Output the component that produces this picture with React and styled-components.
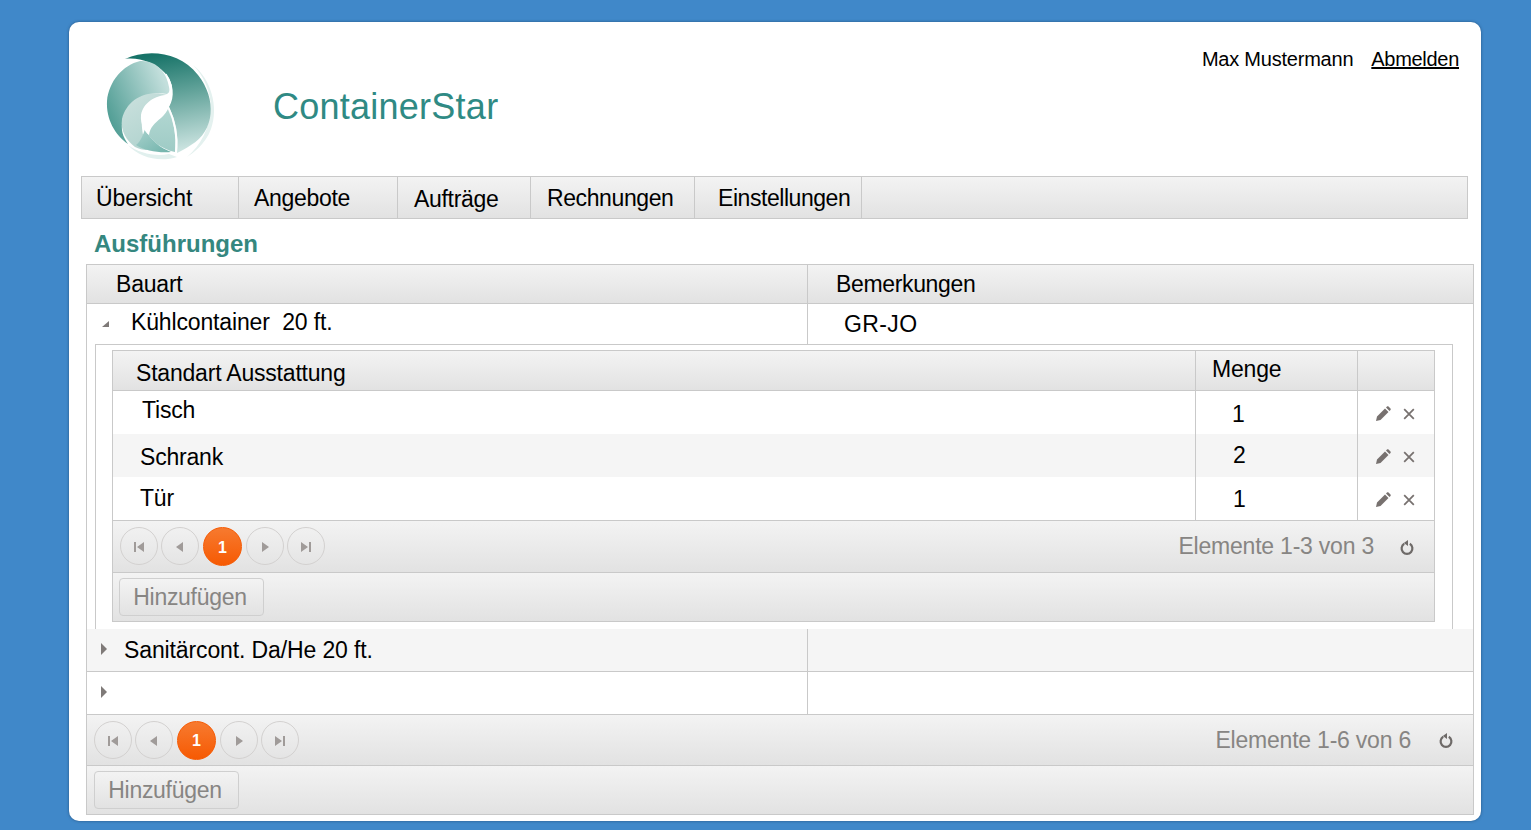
import React from 'react';
import styled, { createGlobalStyle } from 'styled-components';

const Global = createGlobalStyle`
  html, body { margin: 0; padding: 0; background: #4088c9; }
  body { font-family: "Liberation Sans", Arial, sans-serif; color: #000; }
`;

const bar = 'linear-gradient(#f3f3f3, #e2e2e2)';
const line = '#c9c9c9';

const Card = styled.div`
  box-sizing: border-box;
  width: 1412px;
  height: 799px;
  margin: 22px 0 9px 69px;
  background: #fff;
  border-radius: 10px;
  box-shadow: 0 0 3px rgba(20, 50, 80, 0.6);
  overflow: hidden;
  position: relative;
`;

const Header = styled.header`
  height: 154px;
  display: flex;
  align-items: flex-start;
  padding: 0 22px 0 26px;
`;

const Logo = styled.svg`
  width: 130px;
  height: 120px;
  margin-top: 23px;
  flex: none;
`;

const Title = styled.h1`
  margin: 62px 0 0 48px;
  font-size: 36px;
  line-height: 46px;
  font-weight: 400;
  letter-spacing: 0.25px;
  color: #2f8a84;
`;

const User = styled.div`
  margin: 25px 0 0 auto;
  font-size: 20px;
  line-height: 24px;
  letter-spacing: -0.22px;
  display: flex;
  gap: 18px;
`;

const Logout = styled.a`
  color: #000;
  letter-spacing: -0.3px;
  text-decoration: underline;
  cursor: pointer;
`;

const Menu = styled.nav`
  box-sizing: border-box;
  display: flex;
  width: 1387px;
  height: 43px;
  margin-left: 12px;
  background: ${bar};
  border: 1px solid ${line};
`;

const MenuItem = styled.a`
  box-sizing: border-box;
  width: ${p => p.$w}px;
  padding: ${p => p.$top || 0}px 0 0 ${p => p.$pl}px;
  font-size: 23px;
  line-height: 42px;
  letter-spacing: ${p => p.$ls || -0.3}px;
  border-right: 1px solid ${line};
  white-space: nowrap;
`;

const Section = styled.h2`
  height: 45px;
  margin: 0 0 0 25px;
  font-size: 24px;
  line-height: 50px;
  font-weight: 700;
  color: #35877f;
`;

const Grid = styled.div`
  box-sizing: border-box;
  width: ${p => p.$w}px;
  margin-left: ${p => p.$ml || 0}px;
  border: 1px solid ${line};
  background: #fff;
`;

const Row = styled.div`
  display: grid;
  grid-template-columns: ${p => p.$cols};
  height: ${p => p.$h}px;
  background: ${p => (p.$head ? bar : p.$alt ? '#f5f5f5' : '#fff')};
  border-bottom: ${p => (p.$line ? `1px solid ${line}` : 'none')};
`;

const Cell = styled.div`
  box-sizing: border-box;
  display: flex;
  align-items: center;
  padding: ${p => p.$pt || 0}px 0 ${p => p.$pb || 0}px ${p => p.$pl || 0}px;
  font-size: 23px;
  letter-spacing: ${p => p.$ls ?? -0.2}px;
  white-space: pre;
  border-right: ${p => (p.$edge ? `1px solid ${line}` : 'none')};
`;

const Toggle = styled.svg`
  width: 8px;
  height: 12px;
  flex: none;
  margin: 0 ${p => p.$mr || 0}px ${p => p.$up || 0}px 0;
  fill: #7f7a78;
`;

const DetailWrap = styled.div`
  height: 285px;
  padding-left: 8px;
`;

const DetailBox = styled.div`
  box-sizing: border-box;
  width: 1358px;
  height: 285px;
  padding: 5px 0 0 16px;
  border: 1px solid ${line};
  border-bottom: none;
`;

const Pager = styled.div`
  box-sizing: border-box;
  height: ${p => p.$h}px;
  display: flex;
  align-items: center;
  padding: 0 ${p => p.$right}px 0 ${p => p.$left}px;
  background: ${bar};
  border-top: 1px solid ${line};
  border-bottom: 1px solid ${line};
`;

const Pages = styled.div`
  display: flex;
  gap: 3px;
`;

const Round = styled.span`
  box-sizing: border-box;
  width: 38px;
  height: 38px;
  padding-top: 2px;
  display: flex;
  align-items: center;
  justify-content: center;
  border-radius: 50%;
  border: 1px solid #d3d1d0;
  color: #fff;
  font-size: 16px;
  font-weight: 700;
  ${p => p.$active && `
    width: 39px;
    height: 39px;
    margin: 0 1px;
    background: linear-gradient(#f77a2f, #f65a03);
    border-color: #f65a03;
  `}
`;

const PageIcon = styled.svg`
  width: 10px;
  height: 10px;
  fill: #a09b99;
`;

const Count = styled.span`
  margin-left: auto;
  font-size: 23px;
  letter-spacing: -0.22px;
  color: #878583;
`;

const Reload = styled.svg`
  width: 14px;
  height: 16px;
  margin-left: ${p => p.$ml}px;
  fill: none;
  stroke: #6e6a68;
  stroke-width: 2.2;
`;

const Tools = styled.div`
  box-sizing: border-box;
  height: 48px;
  padding: 5px 0 0 ${p => p.$left}px;
  background: ${bar};
`;

const AddButton = styled.button`
  box-sizing: border-box;
  display: block;
  width: 145px;
  height: 38px;
  padding: 0 3px 0 0;
  background: ${bar};
  border: 1px solid #cfcfcf;
  border-radius: 4px;
  color: #878583;
  font: 23px "Liberation Sans", Arial, sans-serif;
  letter-spacing: -0.3px;
`;

const Actions = styled.div`
  display: flex;
  align-items: center;
  gap: 11px;
  padding: 3px 0 0 17px;
`;

const PencilIcon = styled.svg`
  width: 16px;
  height: 16px;
  fill: #77716f;
`;

const CrossIcon = styled.svg`
  width: 14px;
  height: 14px;
  stroke: #77716f;
  stroke-width: 2;
`;

const Pencil = () => (
  <PencilIcon viewBox="0 0 16 16">
    <path d="M1 15l1-4.5L10 2.5l3.5 3.5-8 8zM11 1.5l1-1c.5-.4 1-.4 1.5 0l2 2c.4.5.4 1 0 1.5l-1 1z" />
  </PencilIcon>
);

const Cross = () => (
  <CrossIcon viewBox="0 0 16 16">
    <path d="M2.5 2.5l11 11M13.5 2.5l-11 11" />
  </CrossIcon>
);

const PageGlyph = ({ kind }) => (
  <PageIcon viewBox="0 0 10 10">
    {kind === 'first' && <path d="M0 0h2v10H0zM10 0v10L3 5z" />}
    {kind === 'prev' && <path d="M8 0v10L1 5z" />}
    {kind === 'next' && <path d="M2 0v10l7-5z" />}
    {kind === 'last' && <path d="M8 0h2v10H8zM0 0v10l7-5z" />}
  </PageIcon>
);

const Pagination = ({ text, height, left, right, gap }) => (
  <Pager $h={height} $left={left} $right={right}>
    <Pages>
      <Round><PageGlyph kind="first" /></Round>
      <Round><PageGlyph kind="prev" /></Round>
      <Round $active>1</Round>
      <Round><PageGlyph kind="next" /></Round>
      <Round><PageGlyph kind="last" /></Round>
    </Pages>
    <Count>{text}</Count>
    <Reload $ml={gap} viewBox="0 0 14 16">
      <path d="M4.2 4.8a5.4 5.4 0 1 0 5.6 0" />
      <path d="M8 1v6L3.8 4z" fill="#6e6a68" stroke="none" />
    </Reload>
  </Pager>
);

const LogoMark = () => (
  <Logo viewBox="0 0 130 120">
    <defs>
      <linearGradient id="right" x1="0.45" y1="0" x2="0.6" y2="1">
        <stop offset="0" stopColor="#177368" />
        <stop offset="0.4" stopColor="#5fa198" />
        <stop offset="1" stopColor="#cfe6e3" />
      </linearGradient>
      <linearGradient id="left" x1="0" y1="0.7" x2="0.9" y2="0.2">
        <stop offset="0" stopColor="#4e9c93" />
        <stop offset="1" stopColor="#c3dfdc" />
      </linearGradient>
      <linearGradient id="low" x1="0.1" y1="0" x2="0.6" y2="1">
        <stop offset="0" stopColor="#cbe1de" />
        <stop offset="1" stopColor="#b0d3ce" />
      </linearGradient>
      <linearGradient id="mid" x1="0.5" y1="0" x2="0.5" y2="1">
        <stop offset="0" stopColor="#b4d8d3" />
        <stop offset="1" stopColor="#9ecbc5" />
      </linearGradient>
      <linearGradient id="band" x1="0" y1="0" x2="1" y2="1">
        <stop offset="0" stopColor="#a9d2cd" />
        <stop offset="1" stopColor="#6fb2aa" />
      </linearGradient>
    </defs>
    <path d="M98 20C116 34 124 62 116 84 110 100 98 108 92 112 106 100 114 84 116 64 116 46 108 30 98 20Z" fill="#e4f1ef" />
    <path d="M33 100C44 108 60 112 74 109L82 112C64 118 44 112 33 100Z" fill="#e1f0ee" />
    <path d="M30 14C52 4 84 6 103 30 122 54 120 86 96 100 90 104 86 106 82 108 84 92 80 74 74 62 80 52 79 38 70 28 60 18 44 12 30 14Z" fill="url(#right)" />
    <path d="M45 16C62 15 72 28 74 42 75 46 74 48 72 49 54 45 34 56 28 74 25 84 28 92 33 99 20 90 11 74 12 56 14 36 28 20 45 16Z" fill="url(#left)" />
    <path d="M72 50C52 44 32 54 27 74 25 86 32 96 40 102 44 104 48 105 52 105 48 92 46 82 47 72 47 62 56 54 72 50Z" fill="url(#low)" />
    <path d="M72 60C60 72 52 78 50 84 56 96 66 104 80 107 82 92 78 72 72 60Z" fill="url(#mid)" />
    <path d="M50 84C56 96 66 103 76 107 64 108 50 106 41 100 46 96 48 90 50 84Z" fill="url(#band)" />
    <path d="M73 50C60 50 48 58 46 70 45 79 50 87 54 90 55 82 60 78 66 73 73 67 78 56 73 50Z" fill="#fff" />
    <path d="M71 29C76 36 78 43 75 50" fill="none" stroke="#fff" strokeWidth="1.2" />
    <path d="M73 62C79 74 83 90 81 107" fill="none" stroke="#fff" strokeWidth="2" opacity="0.85" />
  </Logo>
);

const outerCols = '721px 1fr';
const innerCols = '1083px 162px 1fr';

const detailRows = [
  { name: 'Tisch', pl: 29, pb: 5, qty: '1', qpl: 36, qt: 3 },
  { name: 'Schrank', pl: 27, pt: 4, qty: '2', qpl: 37, qb: 1, alt: true },
  { name: 'Tür', pl: 27, qty: '1', qpl: 37, qt: 2 },
];

export default function App() {
  return (
    <>
      <Global />
      <Card>
        <Header>
          <LogoMark />
          <Title>ContainerStar</Title>
          <User>
            <span>Max Mustermann</span>
            <Logout>Abmelden</Logout>
          </User>
        </Header>
        <Menu>
          <MenuItem $w={157} $pl={14} $ls={-0.1}>Übersicht</MenuItem>
          <MenuItem $w={159} $pl={15}>Angebote</MenuItem>
          <MenuItem $w={133} $pl={16} $top={1}>Aufträge</MenuItem>
          <MenuItem $w={164} $pl={16} $ls={-0.4}>Rechnungen</MenuItem>
          <MenuItem $w={167} $pl={23} $ls={-0.45}>Einstellungen</MenuItem>
        </Menu>
        <Section>Ausführungen</Section>
        <Grid $w={1388} $ml={17}>
          <Row $head $line $cols={outerCols} $h={38}>
            <Cell $edge $pl={29}>Bauart</Cell>
            <Cell $pl={28} $ls={-0.35}>Bemerkungen</Cell>
          </Row>
          <Row $cols={outerCols} $h={40}>
            <Cell $edge $pl={14} $pb={3} $ls={-0.15}>
              <Toggle $mr={22} viewBox="0 0 8 12"><path d="M8 4v6H1z" /></Toggle>
              {'Kühlcontainer  20 ft.'}
            </Cell>
            <Cell $pl={36} $ls={0.4}>GR-JO</Cell>
          </Row>
          <DetailWrap>
            <DetailBox>
              <Grid $w={1323}>
                <Row $head $line $cols={innerCols} $h={39}>
                  <Cell $edge $pl={23} $pt={5}>Standart Ausstattung</Cell>
                  <Cell $edge $pl={16} $pb={3}>Menge</Cell>
                  <Cell />
                </Row>
                {detailRows.map(r => (
                  <Row key={r.name} $alt={r.alt} $cols={innerCols} $h={43}>
                    <Cell $edge $pl={r.pl} $pb={r.pb} $pt={r.pt}>{r.name}</Cell>
                    <Cell $edge $pl={r.qpl} $pb={r.qb} $pt={r.qt}>{r.qty}</Cell>
                    <Actions><Pencil /><Cross /></Actions>
                  </Row>
                ))}
                <Pagination text="Elemente 1-3 von 3" height={53} left={7} right={20} gap={26} />
                <Tools $left={6}><AddButton>Hinzufügen</AddButton></Tools>
              </Grid>
            </DetailBox>
          </DetailWrap>
          <Row $alt $line $cols={outerCols} $h={42}>
            <Cell $edge $pl={13} $ls={-0.12}>
              <Toggle $mr={16} $up={2} viewBox="0 0 8 12"><path d="M1 0v12l6-6z" /></Toggle>
              Sanitärcont. Da/He 20 ft.
            </Cell>
            <Cell />
          </Row>
          <Row $cols={outerCols} $h={42}>
            <Cell $edge $pl={13}>
              <Toggle $up={3} viewBox="0 0 8 12"><path d="M1 0v12l6-6z" /></Toggle>
            </Cell>
            <Cell />
          </Row>
          <Pagination text="Elemente 1-6 von 6" height={52} left={7} right={20} gap={28} />
          <Tools $left={7}><AddButton>Hinzufügen</AddButton></Tools>
        </Grid>
      </Card>
    </>
  );
}
